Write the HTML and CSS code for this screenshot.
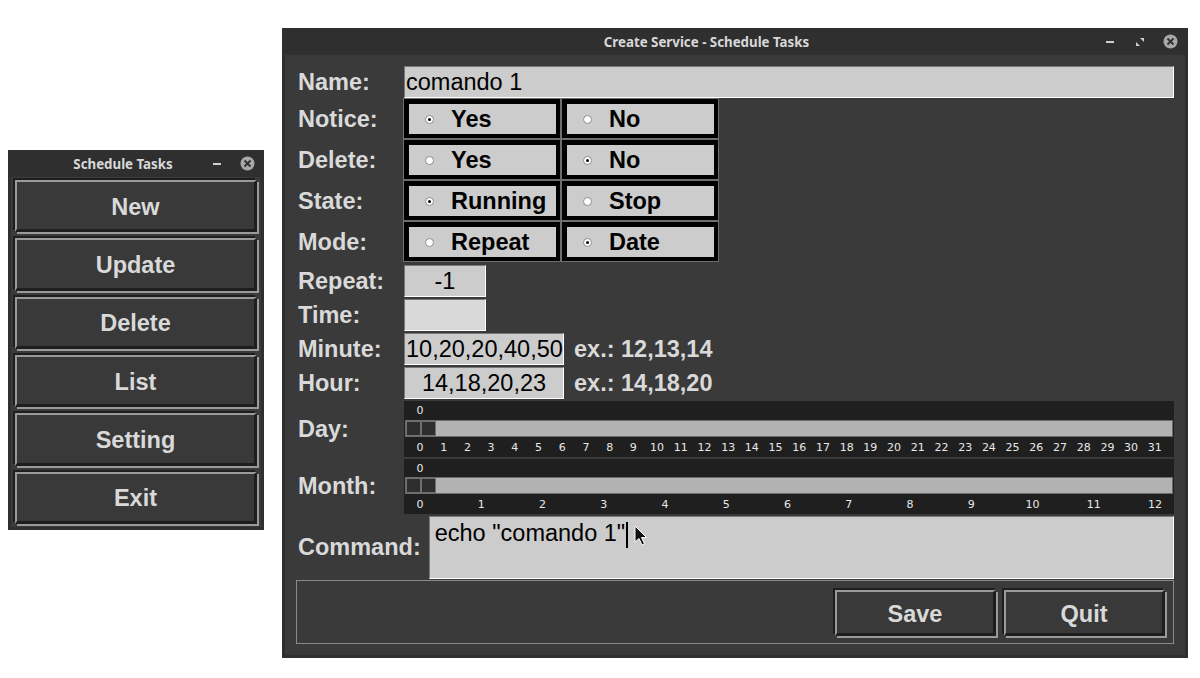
FILE: index.html
```html
<!DOCTYPE html>
<html>
<head>
<meta charset="utf-8">
<title>Schedule Tasks</title>
<link rel="stylesheet" href="styles.css">
</head>
<body>
<div class="win win-menu">
  <div class="titlebar">
    <span class="title">Schedule Tasks</span>
    <div class="controls">
      <span class="ctl"><svg width="8" height="2" viewBox="0 0 8 2"><rect width="8" height="2" fill="#cfcfcf"/></svg></span>
      <span class="ctl"><svg width="15" height="15" viewBox="-7.5 -7.5 15 15"><circle r="7" fill="#a8a8a8"/><path d="M-3 -3L3 3M3 -3L-3 3" stroke="#2f2f2f" stroke-width="1.8"/></svg></span>
    </div>
  </div>
  <div class="win-body menu-body">
    <div class="btn">New</div>
    <div class="btn">Update</div>
    <div class="btn">Delete</div>
    <div class="btn">List</div>
    <div class="btn">Setting</div>
    <div class="btn">Exit</div>
  </div>
</div>

<div class="win win-form">
  <div class="titlebar">
    <span class="title">Create Service - Schedule Tasks</span>
    <div class="controls">
      <span class="ctl"><svg width="8" height="2" viewBox="0 0 8 2"><rect width="8" height="2" fill="#cfcfcf"/></svg></span>
      <span class="ctl"><svg width="8" height="8" viewBox="0 0 8 8"><path d="M4 0H8V4Z M0 4V8H4Z" fill="#cfcfcf"/></svg></span>
      <span class="ctl"><svg width="15" height="15" viewBox="-7.5 -7.5 15 15"><circle r="7" fill="#a8a8a8"/><path d="M-3 -3L3 3M3 -3L-3 3" stroke="#2f2f2f" stroke-width="1.8"/></svg></span>
    </div>
  </div>
  <div class="win-body form">
    <div class="row h32">
      <span class="lbl">Name:</span>
      <div class="entry grow">comando 1</div>
    </div>

    <div class="row rrow">
      <span class="lbl">Notice:</span>
      <div class="radios">
        <div class="rcell"><div class="rinner"><span class="dot on"></span><span>Yes</span></div></div>
        <div class="rcell"><div class="rinner"><span class="dot"></span><span>No</span></div></div>
      </div>
    </div>
    <div class="row rrow">
      <span class="lbl">Delete:</span>
      <div class="radios">
        <div class="rcell"><div class="rinner"><span class="dot"></span><span>Yes</span></div></div>
        <div class="rcell"><div class="rinner"><span class="dot on"></span><span>No</span></div></div>
      </div>
    </div>
    <div class="row rrow">
      <span class="lbl">State:</span>
      <div class="radios">
        <div class="rcell"><div class="rinner"><span class="dot on"></span><span>Running</span></div></div>
        <div class="rcell"><div class="rinner"><span class="dot"></span><span>Stop</span></div></div>
      </div>
    </div>
    <div class="row rrow">
      <span class="lbl">Mode:</span>
      <div class="radios">
        <div class="rcell"><div class="rinner"><span class="dot"></span><span>Repeat</span></div></div>
        <div class="rcell"><div class="rinner"><span class="dot on"></span><span>Date</span></div></div>
      </div>
    </div>

    <div class="row h32 mt3">
      <span class="lbl">Repeat:</span>
      <div class="entry small center">-1</div>
    </div>
    <div class="row h32 mt2">
      <span class="lbl">Time:</span>
      <div class="entry small light"></div>
    </div>
    <div class="row h32 mt2">
      <span class="lbl">Minute:</span>
      <div class="entry medium">10,20,20,40,50</div>
      <span class="hint">ex.: 12,13,14</span>
    </div>
    <div class="row h32 mt2">
      <span class="lbl">Hour:</span>
      <div class="entry medium center">14,18,20,23</div>
      <span class="hint">ex.: 14,18,20</span>
    </div>

    <div class="row mt2">
      <span class="lbl">Day:</span>
      <div class="slider day">
        <div class="val"><span>0</span></div>
        <div class="trough"><span class="knob"></span><span class="knob"></span></div>
        <div class="ticks">
          <span>0</span><span>1</span><span>2</span><span>3</span><span>4</span><span>5</span><span>6</span><span>7</span><span>8</span><span>9</span><span>10</span><span>11</span><span>12</span><span>13</span><span>14</span><span>15</span><span>16</span><span>17</span><span>18</span><span>19</span><span>20</span><span>21</span><span>22</span><span>23</span><span>24</span><span>25</span><span>26</span><span>27</span><span>28</span><span>29</span><span>30</span><span>31</span>
        </div>
      </div>
    </div>
    <div class="row mt2">
      <span class="lbl">Month:</span>
      <div class="slider month">
        <div class="val"><span>0</span></div>
        <div class="trough"><span class="knob"></span><span class="knob"></span></div>
        <div class="ticks">
          <span>0</span><span>1</span><span>2</span><span>3</span><span>4</span><span>5</span><span>6</span><span>7</span><span>8</span><span>9</span><span>10</span><span>11</span><span>12</span>
        </div>
      </div>
    </div>

    <div class="row mt2 cmdrow">
      <span class="lbl lbl-auto">Command:</span>
      <div class="entry cmd grow">echo "comando 1"<span class="caret"></span>
        <svg class="pointer" width="13" height="21" viewBox="0 0 13 21"><path d="M1 1V17L5 13.5L8 20L10.5 19L7.5 12.5H12.5Z" fill="#111" stroke="#fff" stroke-width="1" stroke-linejoin="round"/></svg>
      </div>
    </div>

    <div class="actions">
      <div class="btn act">Save</div>
      <div class="btn act">Quit</div>
    </div>
  </div>
</div>
</body>
</html>
```
FILE: styles.css
```css
* { box-sizing: border-box; }

body {
  margin: 0;
  width: 1200px;
  height: 678px;
  background: #ffffff;
  position: relative;
  overflow: hidden;
  font-family: "Liberation Sans", Arial, sans-serif;
}

.win {
  position: absolute;
  background: #2f2f2f;
  display: flex;
  flex-direction: column;
}
.win-menu { left: 8px; top: 150px; width: 256px; height: 380px; }
.win-form { left: 282px; top: 28px; width: 906px; height: 630px; }

.titlebar {
  height: 27px;
  flex: none;
  display: flex;
  align-items: center;
}
.title {
  flex: 1;
  text-align: center;
  padding-left: 36px;
  font-family: "Noto Sans", sans-serif;
  font-weight: 700;
  font-size: 13.3px;
  color: #d8d8d8;
  white-space: nowrap;
}
.controls { display: flex; padding-right: 2px; }
.win-form .controls { padding-right: 3px; }
.ctl {
  width: 30px;
  height: 27px;
  display: flex;
  align-items: center;
  justify-content: center;
}

.win-body {
  flex: 1;
  background: #3a3a3a;
  margin: 0 3px 3px;
}

/* menu */
.menu-body {
  display: flex;
  flex-direction: column;
  gap: 6px;
  padding: 3px 4px;
}
.btn {
  flex: 1;
  background: #393939;
  border-style: solid;
  border-width: 2px 3px 3px 2px;
  border-color: #9a9a9a #1e1e1e #1e1e1e #9a9a9a;
  box-shadow: -2px -2px 0 #1e1e1e, 2px 2px 0 #9a9a9a;
  color: #d9d9d9;
  font-weight: 700;
  font-size: 23.5px;
  display: flex;
  align-items: center;
  justify-content: center;
  padding-top: 3px;
}

/* form */
.form {
  display: flex;
  flex-direction: column;
  padding: 11px 11px 0 13px;
}
.row { display: flex; align-items: center; }
.h32 { height: 32px; }
.mt2 { margin-top: 2px; }
.mt3 { margin-top: 3px; }
.lbl {
  width: 106px;
  flex: none;
  color: #d9d9d9;
  font-weight: 700;
  font-size: 23.5px;
  white-space: nowrap;
}
.rrow .lbl { padding-top: 2px; }
.lbl-auto { width: auto; margin-right: 8px; }
.grow { flex: 1; }

.entry {
  height: 32px;
  background: #cccccc;
  border: 1px solid;
  border-color: #787878 #ffffff #ffffff #787878;
  color: #000;
  font-size: 23.5px;
  line-height: 30px;
  padding: 0 1px;
  white-space: nowrap;
  overflow: hidden;
}
.entry.small { width: 82px; }
.entry.medium { width: 160px; }
.entry.center { text-align: center; }
.entry.light { background: #d9d9d9; }
.hint {
  margin-left: 10px;
  color: #d9d9d9;
  font-weight: 700;
  font-size: 23.5px;
  white-space: nowrap;
}

/* radios */
.rrow { height: 41px; }
.radios { display: flex; margin-left: -1px; }
.rcell {
  width: 158px;
  height: 41px;
  border: 1px solid #6e6e6e;
  background: #000;
  padding: 5px 4px 4px 5px;
}
.rinner {
  height: 100%;
  background: #cccccc;
  display: flex;
  align-items: center;
  padding-left: 16px;
  gap: 17px;
  color: #000;
  font-weight: 700;
  font-size: 23.5px;
  white-space: nowrap;
}
.dot {
  width: 9px;
  height: 9px;
  flex: none;
  border-radius: 50%;
  background: #fff;
  border: 1px solid #8c8c8c;
  display: flex;
  align-items: center;
  justify-content: center;
}
.dot.on::after {
  content: "";
  width: 3px;
  height: 3px;
  border-radius: 50%;
  background: #000;
}

/* sliders */
.slider {
  flex: 1;
  background: #1f1f1f;
  display: flex;
  flex-direction: column;
  padding: 0 1px;
  font-family: "DejaVu Sans", sans-serif;
  font-size: 11px;
  color: #e8e8e8;
}
.slider.day { height: 56px; }
.slider.month { height: 55px; }
.val { height: 19px; display: flex; align-items: center; padding-left: 5px; }
.month .val { height: 18px; }
.val span { width: 20px; text-align: center; }
.trough {
  height: 17px;
  flex: none;
  background: #b2b2b2;
  border: 1px solid #6c6c6c;
  display: flex;
}
.knob {
  width: 15px;
  height: 15px;
  background: #2e2e2e;
  border: 1px solid #707070;
}
.ticks {
  flex: 1;
  display: flex;
  justify-content: space-between;
  align-items: center;
  padding: 0 8px 0 5px;
}
.ticks span { width: 20px; text-align: center; }

/* command */
.cmdrow { align-items: center; }
.entry.cmd {
  height: 63px;
  position: relative;
  padding: 3px 5px 0;
  line-height: 27px;
}
.caret {
  display: inline-block;
  width: 2px;
  height: 26px;
  background: #000;
  vertical-align: middle;
  margin-left: 1px;
}
.pointer { position: absolute; left: 204px; top: 8px; }

/* bottom actions */
.actions {
  margin: 1px 0 0 -2px;
  height: 64px;
  border: 1px solid #8a8a8a;
  display: flex;
  justify-content: flex-end;
  gap: 8px;
  padding: 9px 8px 7px;
}
.btn.act { flex: none; width: 161px; }
```
